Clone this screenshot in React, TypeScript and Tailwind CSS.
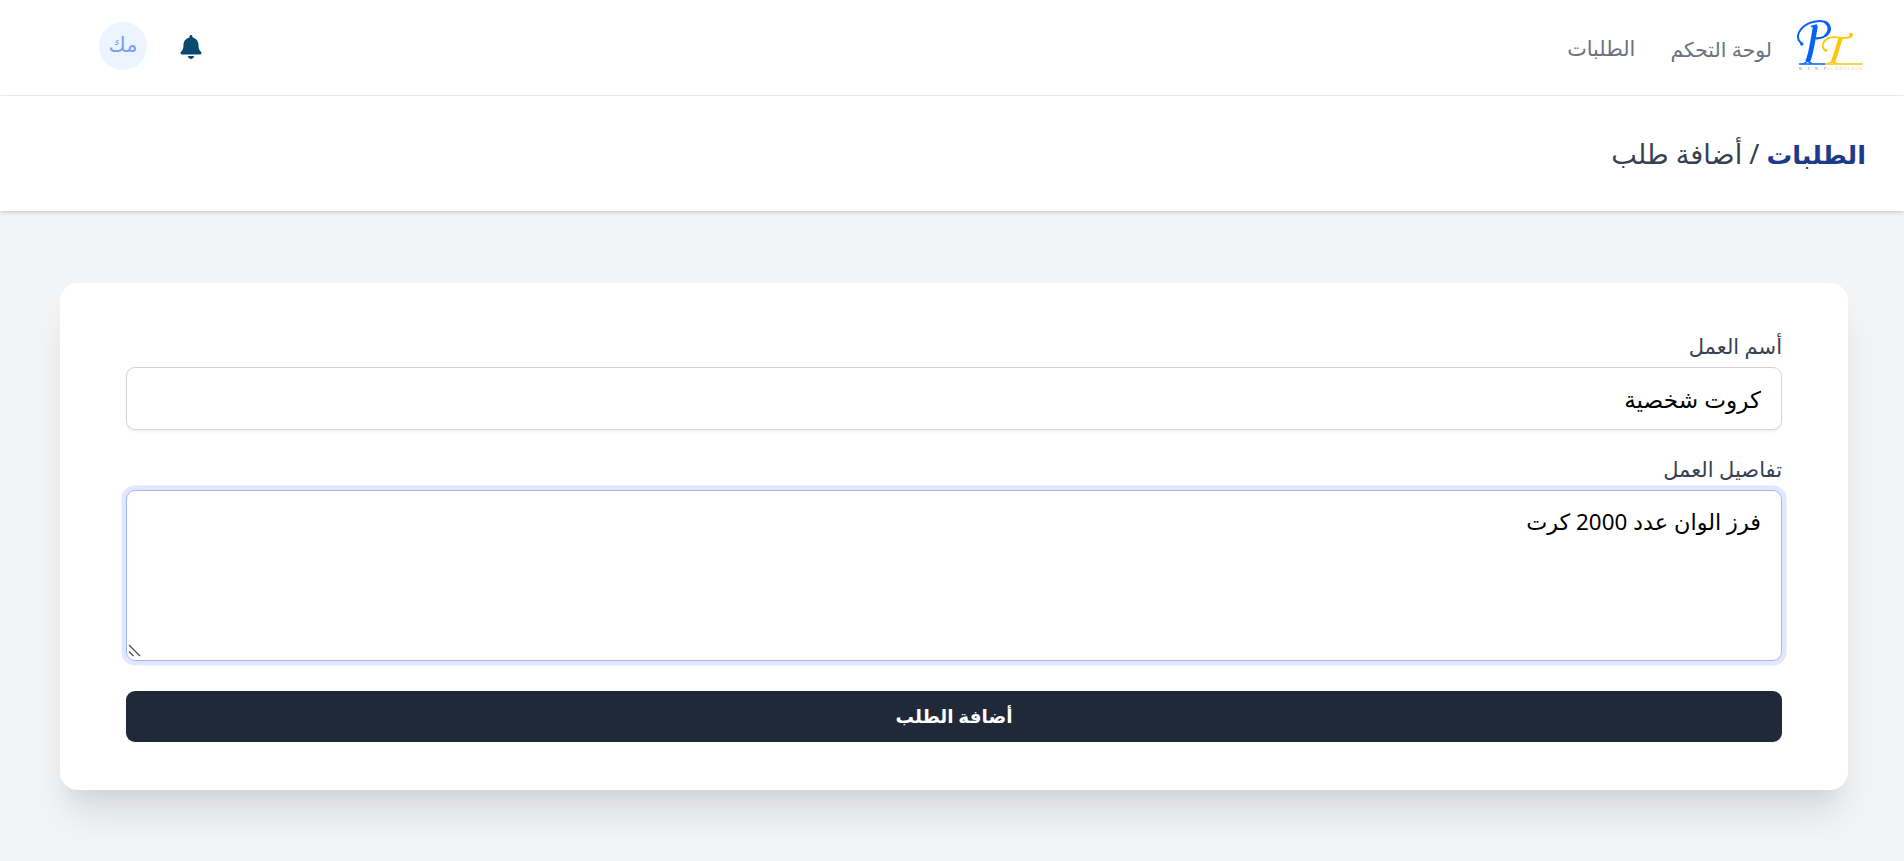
import React from 'react';
import { FaBell } from 'react-icons/fa';

const NavLogo = () => (
  <svg width="68" height="57" viewBox="0 0 68 57" className="shrink-0" direction="ltr">
    <g fill="none" stroke="#0561fc" strokeLinecap="round">
      <path d="M4.500 24.500C-1.500 20 .5 12 8 6.500C15 1.500 27 .5 31 5" strokeWidth="2" />
      <path d="M31 5C36 11.500 30 19.500 19 19.300" strokeWidth="2.200" />
      <path d="M28.500 3.500C33.500 7 32.500 13 28.500 16.500" strokeWidth="2.600" />
      <path d="M18.500 6.500C16 20 14.500 35 10.500 43" strokeWidth="4.800" strokeLinecap="butt" />
      <path d="M14.500 7.500 19.500 6M2.500 45H28" strokeWidth="1.500" />
      <path d="M7 44.500 11 42 15 44.500" strokeWidth="1.200" />
    </g>
    <circle cx="4.800" cy="25" r="1.700" fill="#0561fc" />
    <g fill="none" stroke="#fcc805" strokeLinecap="round">
      <path d="M28.500 31.500C23 28 26.500 19 35 18.300C42 17.500 53 21.500 54.500 16" strokeWidth="1.800" />
      <path d="M44 18.500C40 28 39.500 36 35.500 43.500" strokeWidth="4.200" strokeLinecap="butt" />
      <path d="M29 45H65" strokeWidth="1.500" />
      <path d="M31 44.500 36 42.500 40 44.500" strokeWidth="1.200" />
    </g>
    <circle cx="28.700" cy="31.300" r="1.500" fill="#fcc805" />
    <circle cx="54" cy="15.800" r="2" fill="#fcc805" />
    <g fontSize="4" fontFamily="Liberation Serif, serif">
      <text x="2" y="50.500" textLength="27" fill="#3f80f5">KINT</text>
      <text x="30.500" y="50.500" textLength="35" fill="#eec83c">ECHNOLOGY</text>
    </g>
  </svg>
);

interface FieldProps {
  label: string;
  children: React.ReactNode;
}

const Field: React.FC<FieldProps> = ({ label, children }) => (
  <label className="flex flex-col">
    <span className="h-8 text-[21px] leading-[23px] text-[#374151]">{label}</span>
    {children}
  </label>
);

export default function App() {
  return (
    <div
      dir="rtl"
      className="h-[861px] overflow-hidden bg-[#f3f4f6] font-['Noto_Sans','DejaVu_Sans',sans-serif]"
    >
      <nav className="flex h-24 items-center justify-between border-b border-[#ebecee] bg-white pr-[39px] pl-[99px]">
        <div className="flex items-center">
          <NavLogo />
          <a href="#" className="mt-[3px] mr-[25px] text-[20.4px] font-medium text-[#6b7280]">لوحة التحكم</a>
          <a href="#" className="mt-[3px] mr-[35px] text-[20.8px] font-medium text-[#6b7280]">الطلبات</a>
        </div>
        <div className="flex items-center gap-8 pb-[3px]">
          <FaBell size={24} color="#0b4a6f" className="mt-0.5" />
          <span className="flex size-12 items-center justify-center rounded-full bg-[#ebf4ff] pb-0.5 text-[21px] text-[#7f9cf5]">
            مك
          </span>
        </div>
      </nav>

      <header className="flex h-[115px] items-center bg-white px-[38px] pt-0.5 shadow-[0_1.5px_4.5px_rgba(0,0,0,0.1),0_1.5px_3px_rgba(0,0,0,0.06)]">
        <h2 className="text-[27.2px] text-[#374151]">
          <a href="#" className="text-[25.6px] font-semibold text-[#1e3a8a]">الطلبات</a> / أضافة طلب
        </h2>
      </header>

      <main className="pt-[72px] pr-14 pl-[60px]">
        <form className="flex flex-col rounded-[18px] bg-white px-[66px] pt-[52px] pb-12 shadow-[0_30px_37.5px_-7.5px_rgba(0,0,0,0.1),0_15px_15px_-7.5px_rgba(0,0,0,0.04)]">
          <Field label="أسم العمل">
            <input
              type="text"
              defaultValue="كروت شخصية"
              className="h-[63px] rounded-[9px] border border-[#d1d5db] px-5 text-[23.2px] text-black shadow-[0_1.5px_3px_rgba(0,0,0,0.05)] outline-none"
            />
          </Field>

          <div className="relative mt-7">
            <Field label="تفاصيل العمل">
              <textarea
                defaultValue="فرز الوان عدد 2000 كرت"
                className="h-[171px] resize-none rounded-[9px] border border-[#a5b4fc] px-5 py-[13px] text-[22.4px] leading-9 text-black ring-[4.5px] ring-[#e0e7ff] outline-none"
              />
            </Field>
            <svg width="14" height="13" viewBox="0 0 14 13" className="absolute bottom-1 left-0.5">
              <path d="M1 1 12 12M1 7.500 5.500 12" stroke="#4b4b4b" strokeWidth="1.300" />
            </svg>
          </div>

          <button
            type="button"
            className="mt-[30px] h-[51px] rounded-[9px] bg-[#1f2937] pb-0.5 text-[18.4px] font-semibold text-white"
          >
            أضافة الطلب
          </button>
        </form>
      </main>
    </div>
  );
}
